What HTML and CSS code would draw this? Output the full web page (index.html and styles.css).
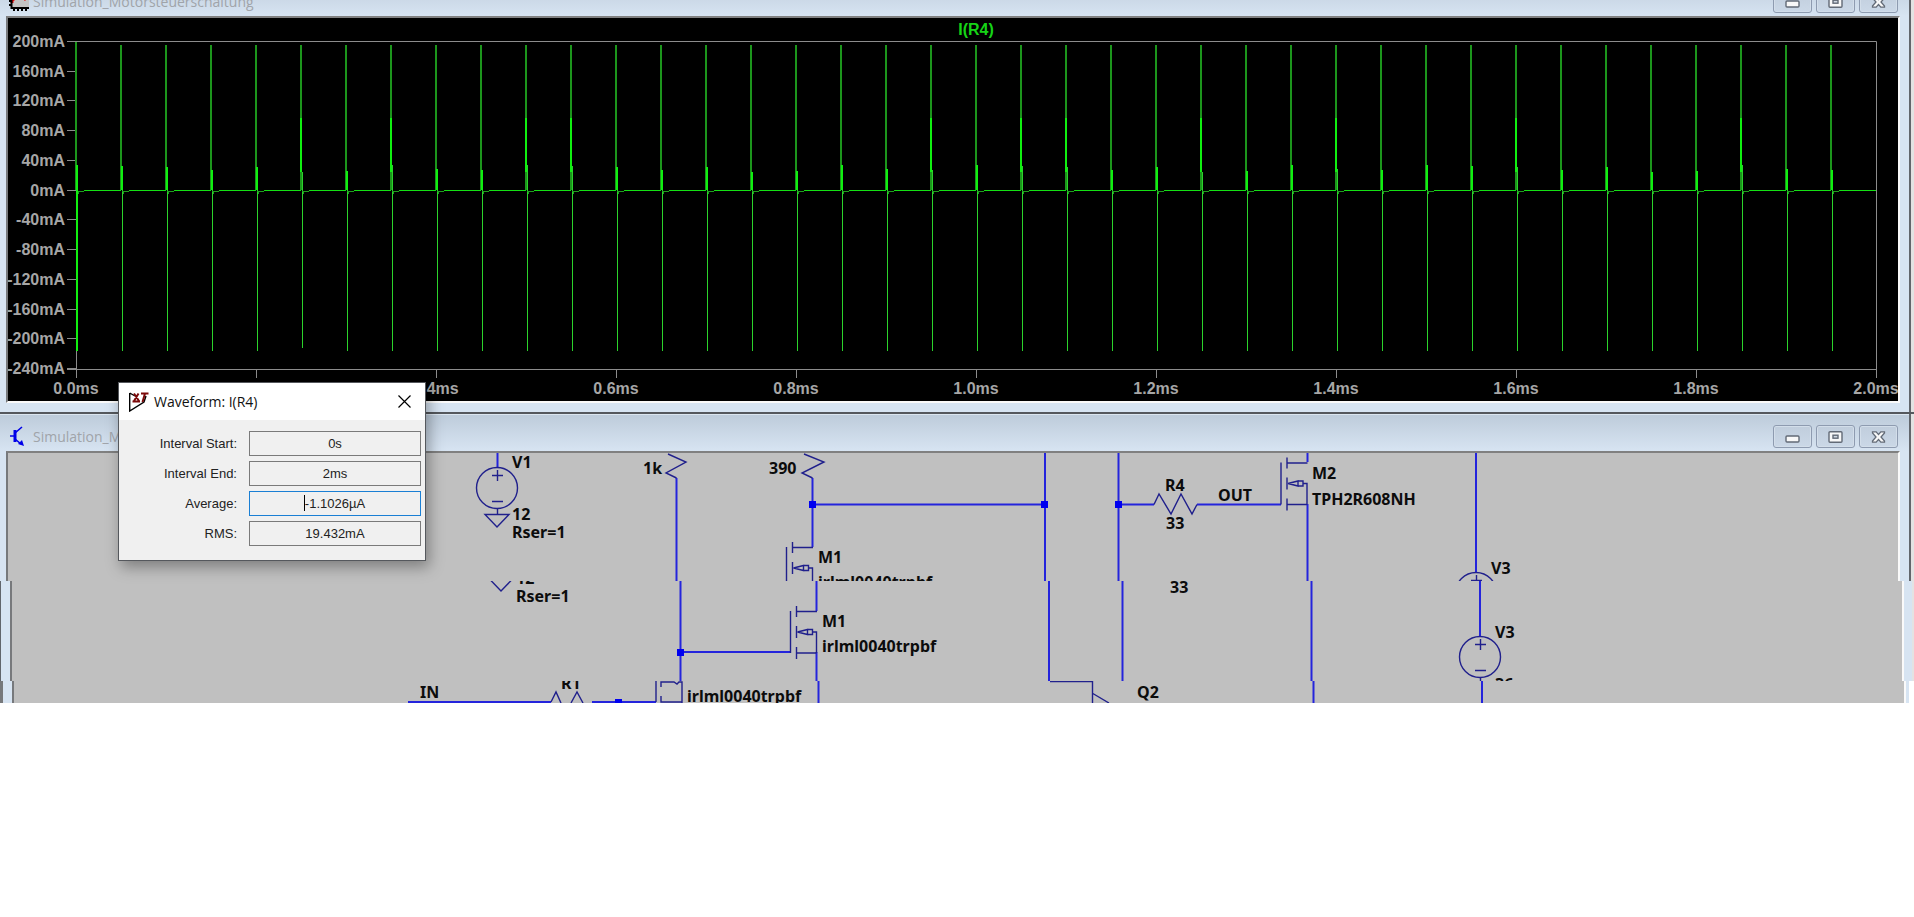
FILE: index.html
```html
<!DOCTYPE html>
<html lang="de">
<head>
    <meta charset="UTF-8">
    <meta name="viewport" content="width=device-width, initial-scale=1.0">
    <title>Simulation_Motorsteuerschaltung</title>
    <link rel="stylesheet" href="styles.css">
</head>
<body>
<!-- Shared symbols -->
<svg class="defs" width="0" height="0" aria-hidden="true">
    <defs>
        <g id="icon-min">
            <rect x="1" y="5" width="13" height="6" rx="1" fill="#f8f8f8" stroke="#626a76" stroke-width="1.4"/>
        </g>
        <g id="icon-max">
            <rect x="1" y="0.7" width="13" height="10.6" rx="1" fill="#f8f8f8" stroke="#626a76" stroke-width="1.4"/>
            <rect x="5" y="4.2" width="5" height="3" fill="#d0d8e2" stroke="#626a76" stroke-width="1.4"/>
        </g>
        <g id="icon-close">
            <path d="M1.5 .8H5.2L7.5 3.6L9.8 .8H13.5V2L10 6L13.5 10V11.2H9.8L7.5 8.4L5.2 11.2H1.5V10L5 6L1.5 2Z" fill="#f8f8f8" stroke="#626a76" stroke-width="1.3"/>
        </g>
        <!-- origin: drain corner -->
        <g id="mosfet">
            <path d="M-26 0V42M-20 -5V6M-20 .5H.5M-20 15V27M-4 21H0V42M-20 36V48M-20 42H0"/>
            <path d="M-19 21L-9 18.5V23.5ZM-9 18.5H-4V23.5H-9"/>
        </g>
        <!-- origin: centre of the circle -->
        <g id="source">
            <circle r="20.5"/>
            <path d="M-5 -12.5H6M.5 -18V-7M-5 13.5H6M.5 20V26"/>
        </g>
        <g id="ground">
            <path d="M-12 0H12L0 12.5Z"/>
        </g>
    </defs>
</svg>

<main class="desktop">
    <!-- Plot window -->
    <section class="window plot-window">
        <header class="titlebar">
            <svg class="title-icon" viewBox="0 0 20 20" aria-hidden="true">
                <rect x="3" y="0" width="17" height="16" fill="#c4c4c4"/>
                <path d="M3 12V5L6 9M12 8L14 5L17 9" fill="none" stroke="#e00000" stroke-width="3"/>
                <path d="M2.5 0V17H20M0 6H3M0 10H3M0 14H3M5 16V20M9 16V20M13 16V20M17 16V20" fill="none" stroke="#000" stroke-width="2"/>
            </svg>
            <span class="title">Simulation_Motorsteuerschaltung</span>
            <button type="button" class="caption" aria-label="Minimize"><svg viewBox="0 0 15 12"><use href="#icon-min"/></svg></button>
            <button type="button" class="caption" aria-label="Maximize"><svg viewBox="0 0 15 12"><use href="#icon-max"/></svg></button>
            <button type="button" class="caption" aria-label="Close"><svg viewBox="0 0 15 12"><use href="#icon-close"/></svg></button>
        </header>
        <div class="strip">
            <svg class="client plot" id="plot" viewBox="8 18 1890 383"></svg>
        </div>
    </section>

    <!-- Schematic window -->
    <section class="window schematic-window">
        <header class="titlebar">
            <svg class="title-icon" viewBox="0 0 20 20" aria-hidden="true">
                <path d="M1 10H6M13 1L6 7M6 13L12 18" fill="none" stroke="#0000e8" stroke-width="1.6"/>
                <path d="M6 4V16" stroke="#0000e8" stroke-width="3"/>
                <path d="M15 20L9 18L13 14Z" fill="#0000e8"/>
            </svg>
            <span class="title">Simulation_Motorsteuerschaltung</span>
            <button type="button" class="caption" aria-label="Minimize"><svg viewBox="0 0 15 12"><use href="#icon-min"/></svg></button>
            <button type="button" class="caption" aria-label="Maximize"><svg viewBox="0 0 15 12"><use href="#icon-max"/></svg></button>
            <button type="button" class="caption" aria-label="Close"><svg viewBox="0 0 15 12"><use href="#icon-close"/></svg></button>
        </header>

        <div class="strip">
            <svg class="client sheet" viewBox="8 454 1890 128">
                <g class="wire">
                    <path d="M497.5 454V469M676.5 479V582M812.5 479V548M812.5 505.5H1045M1045 454V582"/>
                    <path d="M1118.5 454V582M1118.5 505.5H1154M1197 505.5H1281M1307.5 454V463M1307.5 505V582M1476 454V573"/>
                </g>
                <g class="part">
                    <use href="#source" x="497" y="489"/>
                    <use href="#ground" x="497" y="515.5"/>
                    <path d="M668 455L686 463L666 474L676.5 479M804 455L824 463L802 474L812.5 479"/>
                    <use href="#mosfet" x="812.5" y="548"/>
                    <path d="M1154 505.5L1159 495L1171 515L1181 495L1192 515L1197 505.5"/>
                    <use href="#mosfet" x="1307" y="463.5"/>
                    <use href="#source" x="1476" y="594"/>
                </g>
                <g class="node">
                    <rect x="809" y="502" width="7" height="7"/>
                    <rect x="1041" y="502" width="7" height="7"/>
                    <rect x="1115" y="502" width="7" height="7"/>
                </g>
                <g class="label">
                    <text x="512" y="469">V1</text>
                    <text x="512" y="521">12</text>
                    <text x="512" y="539">Rser=1</text>
                    <text x="643" y="475">1k</text>
                    <text x="769" y="475">390</text>
                    <text x="818" y="564">M1</text>
                    <text x="818" y="589">irlml0040trpbf</text>
                    <text x="1165" y="492">R4</text>
                    <text x="1166" y="530">33</text>
                    <text x="1218" y="502">OUT</text>
                    <text x="1312" y="480">M2</text>
                    <text x="1312" y="506">TPH2R608NH</text>
                    <text x="1491" y="575">V3</text>
                </g>
            </svg>
        </div>

        <div class="strip strip-middle">
            <svg class="client sheet" viewBox="12 582 1890 100">
                <g class="wire">
                    <path d="M680.5 582V682M680.5 653H790M816.5 582V612M816.5 653V682M1049 582V682M1122.5 582V682M1311.5 582V682M1480 582V638"/>
                </g>
                <g class="part">
                    <use href="#ground" x="501" y="579.5"/>
                    <use href="#mosfet" x="816.5" y="612"/>
                    <use href="#source" x="1480" y="658"/>
                </g>
                <g class="node">
                    <rect x="677" y="650" width="7" height="7"/>
                </g>
                <g class="label">
                    <text x="516" y="585">12</text>
                    <text x="516" y="603">Rser=1</text>
                    <text x="822" y="628">M1</text>
                    <text x="822" y="653">irlml0040trpbf</text>
                    <text x="1170" y="594">33</text>
                    <text x="1495" y="639">V3</text>
                    <text x="1495" y="691">36</text>
                </g>
            </svg>
        </div>

        <div class="strip strip-bottom">
            <svg class="client sheet" viewBox="14 682 1890 22">
                <g class="wire">
                    <path d="M408 703H551M592 703H656M818.5 682V704M1313.5 682V704M1482 682V704"/>
                </g>
                <g class="part">
                    <path d="M551 703L556 693L561 704M571 704L577 693L583 704"/>
                    <path d="M656 682V703M661 697V703H682M661 688V683H674L677 685L679 683H682V704"/>
                    <path d="M1050 682.5H1092.5V704M1092 694L1109 704"/>
                </g>
                <g class="node">
                    <rect x="615" y="700" width="7" height="7"/>
                </g>
                <g class="label">
                    <text x="420" y="699">IN</text>
                    <text x="561" y="690">R1</text>
                    <text x="687" y="703">irlml0040trpbf</text>
                    <text x="1137" y="699">Q2</text>
                </g>
            </svg>
        </div>
    </section>

    <!-- Measurement dialog -->
    <form class="dialog">
        <div class="dialog-title">
            <svg class="dialog-icon" viewBox="0 0 20 20" aria-hidden="true">
                <path d="M.7 1V19L15 10L17 4M.7 1L6 4" fill="none" stroke="#000" stroke-width="1.4"/>
                <path d="M5 1.5L10 9M9.5 1.5L5 9M3.5 9.5H11M12 1.5H19.5M16 1.5L13.5 10" fill="none" stroke="#7c0a0a" stroke-width="2"/>
            </svg>
            <span>Waveform: I(R4)</span>
            <button type="button" class="dialog-close" aria-label="Close">
                <svg viewBox="0 0 13 13"><path d="M.5 .5L12.5 12.5M12.5 .5L.5 12.5" stroke="#000" stroke-width="1.2"/></svg>
            </button>
        </div>
        <div class="fields">
            <label for="interval-start">Interval Start:</label>
            <input type="text" id="interval-start" value="0s" readonly>
            <label for="interval-end">Interval End:</label>
            <input type="text" id="interval-end" value="2ms" readonly>
            <label for="average">Average:</label>
            <div class="active">
                <input type="text" id="average" value="-1.1026µA" readonly>
                <span class="caret"></span>
            </div>
            <label for="rms">RMS:</label>
            <input type="text" id="rms" value="19.432mA" readonly>
        </div>
    </form>
</main>
<script src="plot.js"></script>
</body>
</html>
```
FILE: styles.css
```css
body {
    margin: 0;
    background: #fff;
    font-family: "Liberation Sans", Arial, sans-serif;
}
.defs {
    position: absolute;
}
.desktop {
    position: relative;
    overflow: hidden;
}

/* Windows */
.titlebar {
    display: flex;
    align-items: flex-end;
    gap: 4px;
    box-sizing: border-box;
    height: 37px;
    padding: 0 11px 3px 9px;
    background: linear-gradient(#bdcbda, #d7e4f2);
    border-right: 2px solid #62666c;
    box-shadow: inset 0 1px #dce6f0;
}
.plot-window .titlebar {
    margin-top: -21px;
}
.schematic-window {
    border-top: 2px solid #55585d;
}
.title-icon {
    width: 20px;
    height: 20px;
    margin-bottom: 2px;
}
.title {
    flex: 1;
    font: 14px/20px "Open Sans", "Noto Sans", sans-serif;
    color: #a0a4a9;
    margin-bottom: 1px;
}
.caption {
    display: flex;
    align-items: center;
    justify-content: center;
    width: 39px;
    height: 23px;
    padding: 0;
    background: linear-gradient(#c0cddc, #cbd8e7);
    border: 1px solid #8e9bb0;
    border-radius: 3px;
    box-shadow: inset 0 0 0 1px #d3deea;
}
.caption svg {
    width: 15px;
    height: 12px;
}
.window {
    padding-right: 3px;
    background: #e3e3e3;
}

/* Client area with the window frame at both sides */
.strip {
    display: flex;
    background: #d7e4f2;
    padding: 0 9px 0 6px;
    border-right: 2px solid #62666c;
}
.client {
    display: block;
    flex: 1;
    min-width: 0;
    border: solid;
    border-width: 0 2px;
    border-color: #fafafa #fafafa #fafafa #77797c;
}
.titlebar + .strip .client {
    border-top: 2px solid #808080;
}
.plot-window .strip {
    padding-bottom: 9px;
}
.plot-window .client {
    border-bottom: 2px solid #fafafa;
}
.schematic-window {
    padding-right: 0;
}
.schematic-window .titlebar,
.schematic-window .titlebar + .strip {
    margin-right: 3px;
}
.strip-middle {
    margin-right: 2px;
    padding: 0 8px 0 9px;
    border-left: 1px solid #62666c;
    border-right: 0;
}
.strip-bottom {
    padding: 0 3px 0 9px;
    border-left: 3px solid #77797c;
    border-right: 5px solid #fff;
}

/* Plot */
.plot {
    background: #000;
}
.plot .axis {
    fill: none;
    stroke: #8c8c8c;
}
.plot text {
    font-size: 16px;
    font-weight: bold;
    fill: #a6a6a6;
}
.plot .trace-name {
    fill: #16d416;
}
.plot .y-label {
    text-anchor: end;
}
.plot .x-label,
.plot .trace-name {
    text-anchor: middle;
}
.rise {
    stroke: #1c961c;
    stroke-width: 2;
}
.fall {
    stroke: #2bd32b;
}
.peak {
    stroke: #10f010;
    stroke-width: 2;
}
.base {
    stroke: #14e014;
}
.tail {
    stroke: #1f9f1f;
}

/* Schematic */
.sheet {
    background: #c0c0c0;
}
.wire {
    fill: none;
    stroke: #2424dc;
    stroke-width: 2;
}
.part {
    fill: none;
    stroke: #20208c;
    stroke-width: 1.4;
}
.node {
    fill: #0000f0;
}
.label {
    font: bold 16px "Noto Sans", "Open Sans", sans-serif;
    fill: #0c0c0c;
}

/* Dialog */
.dialog {
    position: absolute;
    left: 118px;
    top: 382px;
    width: 306px;
    border: 1px solid #55585d;
    background: #f0f0f0;
    box-shadow: 3px 6px 14px rgba(0, 0, 0, 0.35);
}
.dialog-title {
    display: flex;
    align-items: center;
    gap: 5px;
    height: 37px;
    padding: 0 14px 0 10px;
    background: #fff;
    font: 14px/20px "Open Sans", "Noto Sans", sans-serif;
    color: #111;
}
.dialog-icon {
    width: 20px;
    height: 20px;
}
.dialog-close {
    display: flex;
    margin-left: auto;
    padding: 0;
    border: 0;
    background: none;
}
.dialog-close svg {
    width: 13px;
    height: 13px;
}
.fields {
    display: grid;
    grid-template-columns: 118px 1fr;
    gap: 5px 12px;
    align-items: center;
    padding: 11px 4px 14px 0;
    font-size: 13px;
    color: #222;
}
.fields label {
    text-align: right;
}
.fields input {
    box-sizing: border-box;
    width: 100%;
    height: 25px;
    display: block;
    padding: 0;
    border: 1px solid #7a7a7a;
    background: #f0f0f0;
    font: inherit;
    color: inherit;
    text-align: center;
    outline: 0;
}
.active {
    position: relative;
}
.fields .active input {
    border-color: #1a7fd4;
}
.caret {
    position: absolute;
    left: 55px;
    top: 4px;
    width: 1px;
    height: 16px;
    background: #000;
}
```
FILE: plot.js
```js
const plot = document.getElementById('plot');
const X0 = 76, X1 = 1876, TOP = 42, ZERO = 190.5, BOTTOM = 369;

const add = (name, cls, attrs, text) => {
    const el = document.createElementNS('http://www.w3.org/2000/svg', name);
    el.setAttribute('class', cls);
    for (const key in attrs) el.setAttribute(key, attrs[key]);
    if (text) el.textContent = text;
    plot.appendChild(el);
};

// Axes and labels
let axis = `M67 ${TOP - 0.5}H${X1 + 0.5}V378M${X0 + 0.5} ${TOP}V378M67 ${BOTTOM + 0.5}H${X1}`;
for (let i = 0; i < 12; i++) {
    const y = Math.round(TOP + i * (BOTTOM - TOP) / 11);
    axis += `M67 ${y - 0.5}H76`;
    add('text', 'y-label', { x: 65, y: y + 5 }, (200 - i * 40) + 'mA');
}
for (let i = 0; i <= 10; i++) {
    const x = X0 + i * 180;
    axis += `M${x + 0.5} ${BOTTOM}V378`;
    add('text', 'x-label', { x: x, y: 394 }, (i * 0.2).toFixed(1) + 'ms');
}
add('path', 'axis', { d: axis });
add('text', 'trace-name', { x: 976, y: 35 }, 'I(R4)');

// One switching spike every 50us, some with a higher leading peak
const high = [5, 7, 10, 11, 19, 21, 22, 25, 28, 32, 37];
const small = [165, 166, 167, 170, 167, 172, 171, 165, 169, 170];
let rise = '', fall = '', peak = '', tail = '', base = '';
for (let k = 0; k < 40; k++) {
    const x = X0 + k * 45;
    rise += `M${x} ${k === 0 ? TOP : 45}V190`;
    fall += `M${x + 1.5} 190V${k === 5 ? 348 : 351}`;
    if (high.includes(k)) {
        peak += `M${x} 118V172`;
        fall += `M${x + 1.5} ${small[k % 10]}V190`;
    } else {
        peak += `M${x + 1} ${small[k % 10]}V190`;
    }
    tail += `M${x + 1} 191.5H${x + 8}M${x + 2.5} 191V194`;
    base += `M${x + 8} ${ZERO}H${x + 45}`;
}
peak += `M77 190V351`;
add('path', 'rise', { d: rise });
add('path', 'fall', { d: fall });
add('path', 'tail', { d: tail });
add('path', 'base', { d: base });
add('path', 'peak', { d: peak });
```
